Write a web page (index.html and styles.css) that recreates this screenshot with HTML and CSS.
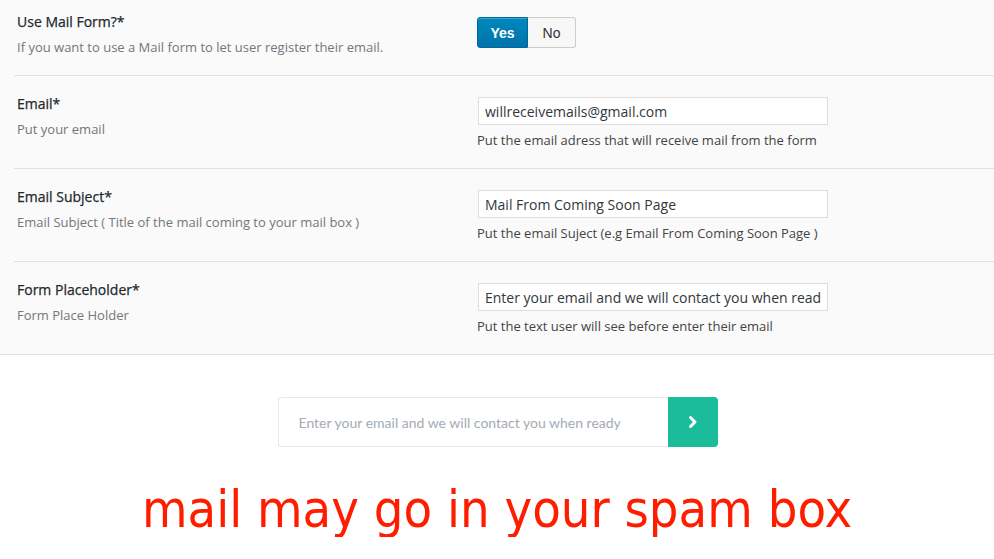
FILE: index.html
```html
<!DOCTYPE html>
<html lang="en">
<head>
<meta charset="utf-8">
<title>Mail Form Settings</title>
<link rel="stylesheet" href="styles.css">
</head>
<body>
<section class="settings">
  <div class="row row-first">
    <div class="label-col">
      <div class="title">Use Mail Form?*</div>
      <div class="desc">If you want to use a Mail form to let user register their email.</div>
    </div>
    <div class="field-col">
      <div class="toggle">
        <button class="tbtn tbtn-on" type="button">Yes</button><button class="tbtn tbtn-off" type="button">No</button>
      </div>
    </div>
  </div>
  <div class="row">
    <div class="label-col">
      <div class="title">Email*</div>
      <div class="desc">Put your email</div>
    </div>
    <div class="field-col">
      <input class="text-input" type="text" value="willreceivemails@gmail.com">
      <div class="help">Put the email adress that will receive mail from the form</div>
    </div>
  </div>
  <div class="row">
    <div class="label-col">
      <div class="title">Email Subject*</div>
      <div class="desc">Email Subject ( Title of the mail coming to your mail box )</div>
    </div>
    <div class="field-col">
      <input class="text-input" type="text" value="Mail From Coming Soon Page">
      <div class="help">Put the email Suject (e.g Email From Coming Soon Page )</div>
    </div>
  </div>
  <div class="row row-last">
    <div class="label-col">
      <div class="title">Form Placeholder*</div>
      <div class="desc">Form Place Holder</div>
    </div>
    <div class="field-col">
      <input class="text-input" type="text" value="Enter your email and we will contact you when ready">
      <div class="help">Put the text user will see before enter their email</div>
    </div>
  </div>
</section>
<section class="preview">
  <form class="subscribe">
    <input class="sub-input" type="text" placeholder="Enter your email and we will contact you when ready">
    <button class="sub-btn" type="button" aria-label="Submit">
      <svg width="14" height="14" viewBox="0 0 14 14"><path d="M4.5 2.5 L9 7 L4.5 11.5" fill="none" stroke="#fff" stroke-width="3" stroke-linecap="round" stroke-linejoin="round"/></svg>
    </button>
  </form>
  <p class="warning">mail may go in your spam box</p>
</section>
</body>
</html>
```
FILE: styles.css
```css
* { box-sizing: border-box; }
body {
  margin: 0;
  background: #ffffff;
  font-family: "Open Sans", "Liberation Sans", sans-serif;
}
.settings {
  background: #fafafa;
  border-bottom: 1px solid #e1e1e1;
}
.row {
  display: flex;
  height: 93px;
  margin-left: 14px;
  padding-left: 3px;
  border-bottom: 1px solid #e1e1e1;
}
.row-first { height: 76px; }
.row-last { border-bottom: none; height: 92px; }
.label-col {
  width: 460px;
  padding-top: 18px;
}
.row-first .label-col { padding-top: 12px; }
.field-col {
  padding-top: 21px;
}
.row-first .field-col { padding-top: 17px; }
.title {
  font-size: 14px;
  line-height: 20px;
  font-weight: 500;
  color: #23282d;
  -webkit-text-stroke: 0.25px #23282d;
}
.desc {
  margin-top: 5px;
  font-size: 13px;
  line-height: 20px;
  color: #72777c;
}
.toggle {
  display: flex;
}
.tbtn {
  height: 31px;
  margin: 0;
  font-family: "Liberation Sans", Arial, sans-serif;
  font-size: 14px;
  cursor: pointer;
}
.tbtn-on {
  width: 51px;
  font-weight: 600;
  color: #fff;
  background: linear-gradient(#0089bd, #0073aa);
  border: 1px solid #006799;
  border-radius: 3px 0 0 3px;
  box-shadow: inset 0 1px 0 rgba(120, 200, 230, 0.5);
}
.tbtn-off {
  width: 48px;
  font-weight: 400;
  color: #333;
  background: #f7f7f7;
  border: 1px solid #cccccc;
  border-left: none;
  border-radius: 0 3px 3px 0;
}
.text-input {
  display: block;
  width: 350px;
  height: 28px;
  margin: 0 0 0 1px;
  padding: 0 6px;
  font-family: "Open Sans", "Liberation Sans", sans-serif;
  font-size: 14px;
  color: #32373c;
  background: #fff;
  border: 1px solid #dddddd;
  border-radius: 0;
}
.help {
  margin-top: 5px;
  font-size: 13px;
  line-height: 20px;
  color: #444;
}
.preview {
  display: flex;
  flex-direction: column;
  align-items: center;
  padding-top: 42px;
}
.subscribe {
  display: flex;
  margin: 0 0 0 1px;
}
.sub-input {
  width: 390px;
  height: 50px;
  padding: 0 20px;
  font-family: Lato, "Open Sans", sans-serif;
  font-size: 14px;
  color: #555;
  border: 1px solid #e8e8e8;
  border-right: none;
  border-radius: 3px 0 0 3px;
  background: #fff;
}
.sub-input::placeholder { color: #a3abb3; }
.sub-btn {
  width: 50px;
  height: 50px;
  display: flex;
  align-items: center;
  justify-content: center;
  background: #1abc9c;
  border: none;
  border-radius: 0 4px 4px 0;
  padding: 0;
}
.warning {
  margin: 34px 0 0 0;
  font-family: "DejaVu Sans Condensed", "DejaVu Sans", sans-serif;
  font-size: 52px;
  line-height: 56px;
  color: #ff1d00;
}
```
